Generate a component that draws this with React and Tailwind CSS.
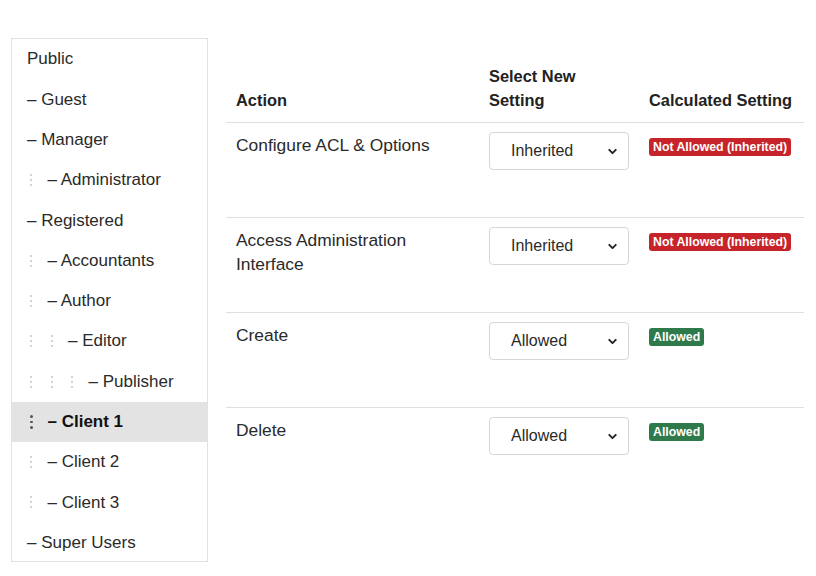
import { ChevronDown } from "lucide-react";

const GROUPS = [
  { name: "Public", depth: 0, dash: false },
  { name: "Guest", depth: 0 },
  { name: "Manager", depth: 0 },
  { name: "Administrator", depth: 1 },
  { name: "Registered", depth: 0 },
  { name: "Accountants", depth: 1 },
  { name: "Author", depth: 1 },
  { name: "Editor", depth: 2 },
  { name: "Publisher", depth: 3 },
  { name: "Client 1", depth: 1, active: true },
  { name: "Client 2", depth: 1 },
  { name: "Client 3", depth: 1 },
  { name: "Super Users", depth: 0 },
];

const RULES = [
  { action: ["Configure ACL & Options"], value: "Inherited", calc: "Not Allowed (Inherited)", ok: false },
  { action: ["Access Administration", "Interface"], value: "Inherited", calc: "Not Allowed (Inherited)", ok: false },
  { action: ["Create"], value: "Allowed", calc: "Allowed", ok: true },
  { action: ["Delete"], value: "Allowed", calc: "Allowed", ok: true },
];

function Dots({ dark }) {
  return (
    <span className="flex w-[20.5px] shrink-0 pl-[3px]">
      <span className="flex flex-col gap-[3px]">
        {[0, 1, 2].map((d) => (
          <span key={d} className={`block rounded-full ${dark ? "h-[2.5px] w-[2.5px] bg-[#555]" : "h-[2px] w-[2px] bg-[#c4c4c4]"}`} />
        ))}
      </span>
    </span>
  );
}

function Select({ value }) {
  return (
    <div className="flex h-[38px] w-[140px] items-center justify-between rounded-[4px] border border-[#d4d7db] pl-[21px] pr-[9px] text-[16px] text-[#2a2a2a]">
      <span>{value}</span>
      <ChevronDown size={13} strokeWidth={3.5} className="text-[#222]" />
    </div>
  );
}

function Badge({ ok, children }) {
  return (
    <span className={`rounded-[3px] px-[4px] text-[12.3px] font-bold leading-[18px] text-white ${ok ? "bg-[#2f7a4b]" : "bg-[#c7232b]"}`}>
      {children}
    </span>
  );
}

function Rule({ action, value, calc, ok }) {
  return (
    <div className="grid h-[95px] grid-cols-[253px_160px_165px] border-t border-[#dcdfe3] text-[17.4px] leading-[24px] text-[#2a2a2a]">
      <div className="px-[10px] pt-[10px]">
        {action.map((a) => (
          <div key={a}>{a}</div>
        ))}
      </div>
      <div className="px-[10px] pt-[9px]">
        <Select value={value} />
      </div>
      <div className="flex items-start px-[10px] pt-[15px]">
        <Badge ok={ok}>{calc}</Badge>
      </div>
    </div>
  );
}

export default function App() {
  return (
    <div className="flex h-[576px] w-[816px] bg-white pl-[11px] pt-[38px] font-['Liberation_Sans',Arial,sans-serif] text-[#2a2a2a]">
      {/* group tree */}
      <div className="h-[524px] w-[197px] shrink-0 border border-[#e0e2e5]">
        {GROUPS.map((g) => (
          <div
            key={g.name}
            className={`flex h-[40.3px] items-center pl-[15px] text-[17px] ${g.active ? "bg-[#e3e3e3] font-bold text-[#111]" : ""}`}
          >
            {Array.from({ length: g.depth }).map((_, i) => (
              <Dots key={i} dark={g.active} />
            ))}
            <span>{g.dash === false ? g.name : `– ${g.name}`}</span>
          </div>
        ))}
      </div>

      {/* permissions table */}
      <div className="ml-[18px] w-[578px] pt-[26px]">
        <div className="grid grid-cols-[253px_160px_165px] items-end pb-[10px] text-[16.4px] font-bold leading-[24px] text-[#222]">
          <div className="px-[10px]">Action</div>
          <div className="px-[10px]">
            Select New
            <br />
            Setting
          </div>
          <div className="px-[10px]">Calculated Setting</div>
        </div>
        {RULES.map((r) => (
          <Rule key={r.action[0]} {...r} />
        ))}
      </div>
    </div>
  );
}
